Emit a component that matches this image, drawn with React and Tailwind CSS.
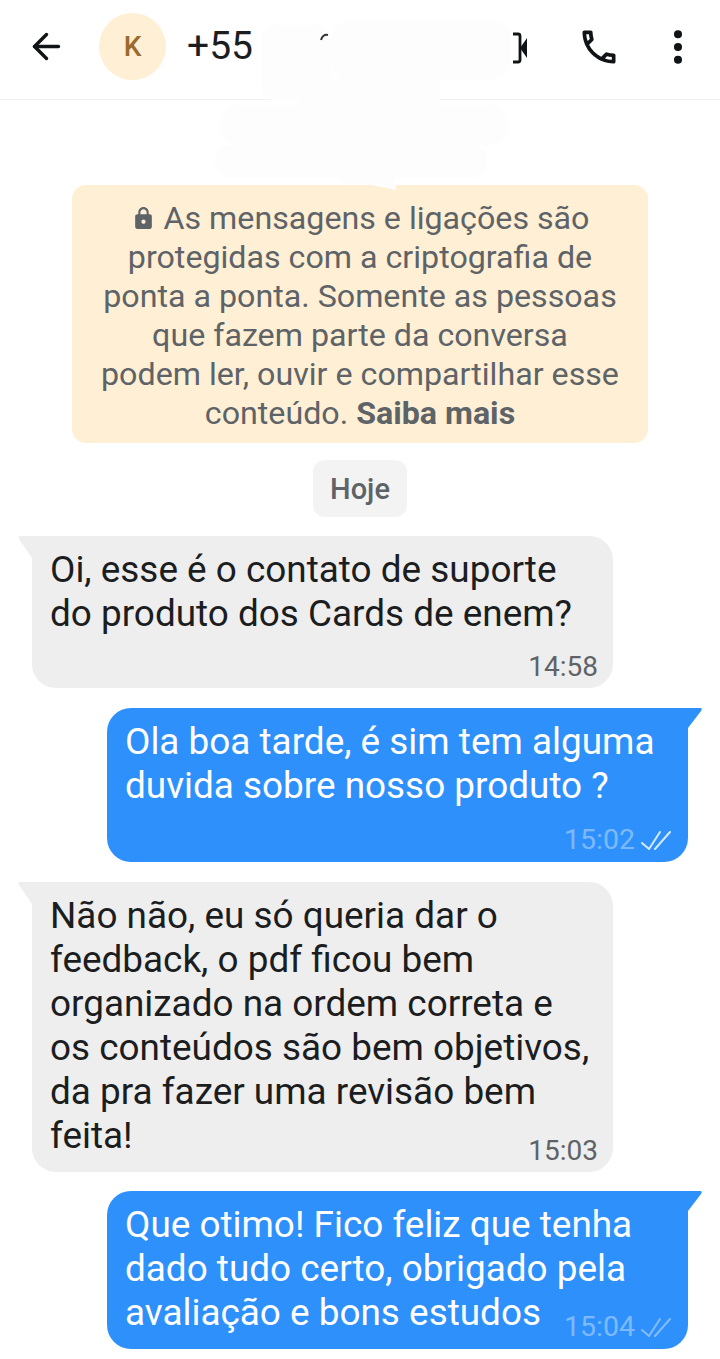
import React from 'react';
import { ArrowLeft, EllipsisVertical } from 'lucide-react';

const messages = [
  { id: 1, mine: false, lines: ['Oi, esse é o contato de suporte', 'do produto dos Cards de enem?'], time: '14:58', rowClass: 'mt-[9px]' },
  { id: 2, mine: true, lines: ['Ola boa tarde, é sim tem alguma', 'duvida sobre nosso produto ?'], time: '15:02', rowClass: 'mt-[11px]' },
  {
    id: 3,
    mine: false,
    lines: ['Não não, eu só queria dar o', 'feedback, o pdf ficou bem', 'organizado na ordem correta e', 'os conteúdos são bem objetivos,', 'da pra fazer uma revisão bem', 'feita!'],
    time: '15:03',
    rowClass: '-mt-[29px]'
  },
  {
    id: 4,
    mine: true,
    lines: ['Que otimo! Fico feliz que tenha', 'dado tudo certo, obrigado pela', 'avaliação e bons estudos'],
    time: '15:04',
    rowClass: '-mt-[29px]',
    faded: true,
    extraClass: '-mt-[1px]'
  }
];

const DoubleCheck = ({ faded }) => (
  <svg width="32" height="22" viewBox="0 0 32 22" fill="none" stroke="white" strokeWidth="2" strokeLinecap="round" strokeLinejoin="round" className={faded ? 'opacity-40' : 'opacity-80'}>
    <path d="M1 13l7 6L19 2" />
    <path d="M14 19L29 2" />
  </svg>
);

const CallIcon = () => (
  <svg width="44" height="44" viewBox="0 0 24 24" fill="#111416">
    <path d="M6.54 5c.06.89.21 1.76.45 2.59l-1.2 1.2c-.41-1.2-.67-2.47-.76-3.79h1.51m9.86 12.02c.85.24 1.72.39 2.6.45v1.49c-1.32-.09-2.59-.35-3.8-.75l1.2-1.19M7.5 3H4c-.55 0-1 .45-1 1 0 9.39 7.61 17 17 17 .55 0 1-.45 1-1v-3.49c0-.55-.45-1-1-1-1.24 0-2.45-.2-3.57-.57-.1-.04-.21-.05-.31-.05-.26 0-.51.1-.71.29l-2.2 2.2c-2.83-1.45-5.15-3.76-6.59-6.59l2.2-2.2c.28-.28.36-.67.25-1.02C8.7 6.45 8.5 5.25 8.5 4c0-.55-.45-1-1-1z" />
  </svg>
);

const LockIcon = () => (
  <svg width="25" height="25" viewBox="0 0 24 24" fill="#5d6367">
    <path d="M18 8h-1V6c0-2.76-2.24-5-5-5S7 3.24 7 6v2H6c-1.1 0-2 .9-2 2v10c0 1.1.9 2 2 2h12c1.1 0 2-.9 2-2V10c0-1.1-.9-2-2-2zm-6 9c-1.1 0-2-.9-2-2s.9-2 2-2 2 .9 2 2-.9 2-2 2zM9 8V6c0-1.66 1.34-3 3-3s3 1.34 3 3v2H9z" />
  </svg>
);

const Bubble = ({ message }) => {
  const { mine, lines, time, rowClass, faded, extraClass } = message;

  return (
    <div className={`relative w-[581px] rounded-[24px] pt-[12px] pl-[18px] pr-[15px] ${mine ? 'self-end rounded-tr-none bg-[#2e90fa] text-white' : 'self-start rounded-tl-none bg-[#eeeeee] text-[#1b1d1f]'} ${extraClass || ''}`}>
      {/* tail */}
      <svg width="14" height="22" viewBox="0 0 14 22" className={`absolute top-0 ${mine ? '-right-[14px]' : '-left-[14px]'}`}>
        {mine ? (
          <path d="M0 0H12Q15 0 13 3L0 20Z" fill="#2e90fa" />
        ) : (
          <path d="M14 0H3Q-1 0 1 3L14 22Z" fill="#eeeeee" />
        )}
      </svg>
      <div className="text-[36.9px] leading-[44px] whitespace-nowrap">
        {lines.map((line) => (
          <div key={line}>{line}</div>
        ))}
      </div>
      <div className={`flex h-[43px] items-center justify-end gap-[6px] ${rowClass} ${mine ? 'text-[28.5px] text-white/40' : 'text-[28px] text-[#5f6368]'}`}>
        <span>{time}</span>
        {mine && <DoubleCheck faded={faded} />}
      </div>
    </div>
  );
};

export default function App() {
  return (
    <div className="relative flex h-[1359px] w-[720px] flex-col overflow-hidden bg-white font-['Roboto',sans-serif]">
      <header className="flex h-[100px] shrink-0 items-center border-b border-[#f0f1f1] pb-[6px] pl-[26px] pr-[20px]">
        <ArrowLeft size={41} strokeWidth={2} className="text-[#111416]" />
        <div className="ml-[32px] flex h-[67px] w-[67px] items-center justify-center rounded-full bg-[#ffefd5] text-[28px] font-medium text-[#9c6a2c]">K</div>
        <span className="ml-[21px] text-[39px] text-[#1b1d1f]">+55</span>
        <div className="ml-auto mr-[35px]"><CallIcon /></div>
        <EllipsisVertical size={44} strokeWidth={2.4} fill="#111416" className="text-[#111416]" />
      </header>

      {/* retouched area over the phone number */}
      <div className="absolute left-[261px] top-[25px] h-[76px] w-[70px] rounded-[16px] bg-[#fdfdfd]" />
      <div className="absolute left-[331px] top-[20px] h-[60px] w-[180px] rounded-[20px] bg-[#fdfdfd]" />
      <div className="absolute left-[300px] top-[78px] h-[30px] w-[140px] bg-[#fdfdfd]" />
      <div className="absolute left-[220px] top-[105px] h-[40px] w-[288px] rounded-[18px] bg-[#fdfdfd]" />
      <div className="absolute left-[215px] top-[145px] h-[33px] w-[272px] rounded-[16px] bg-[#fdfdfd]" />
      <div className="absolute left-[340px] top-[175px] h-[11px] w-[55px] bg-[#fdfdfd]" />
      <svg width="30" height="8" viewBox="0 0 30 8" className="absolute left-[366px] top-[184px] z-10">
        <path d="M0 0H30V6Z" fill="#fdfdfd" />
      </svg>
      {/* what is left of the video icon and the number */}
      <svg width="16" height="32" viewBox="0 0 16 32" fill="none" className="absolute left-[512px] top-[32px]">
        <path d="M1 2H6Q8 2 8 4V28Q8 30 6 30H1" stroke="#111416" strokeWidth="2.8" />
        <path d="M8 16L15 6V26Z" fill="#111416" />
      </svg>
      <svg width="14" height="14" viewBox="0 0 14 14" fill="none" className="absolute left-[319px] top-[31px]">
        <path d="M2 9Q4 3 9 4" stroke="#333" strokeWidth="2" />
      </svg>

      <main className="flex flex-col px-[32px] pt-[85px]">
        <div className="relative mx-[40px] flex h-[258px] flex-col items-center justify-center rounded-[14px] bg-[#ffefd5] pt-[4px] text-center text-[32.2px] leading-[39px] whitespace-nowrap text-[#5d6367]">
          <div className="flex items-center gap-[8px]">
            <LockIcon />
            <span>As mensagens e ligações são</span>
          </div>
          <div>protegidas com a criptografia de</div>
          <div>ponta a ponta. Somente as pessoas</div>
          <div>que fazem parte da conversa</div>
          <div>podem ler, ouvir e compartilhar esse</div>
          <div>conteúdo. <span className="font-bold">Saiba mais</span></div>
        </div>

        <div className="mt-[17px] flex h-[57px] w-[94px] items-center justify-center self-center rounded-[12px] bg-[#f3f3f3] pt-[3px] text-[29px] font-medium text-[#5d6367]">Hoje</div>

        <div className="mt-[19px] flex w-[656px] flex-col gap-[20px]">
          {messages.map((message) => (
            <Bubble key={message.id} message={message} />
          ))}
        </div>
      </main>
    </div>
  );
}
